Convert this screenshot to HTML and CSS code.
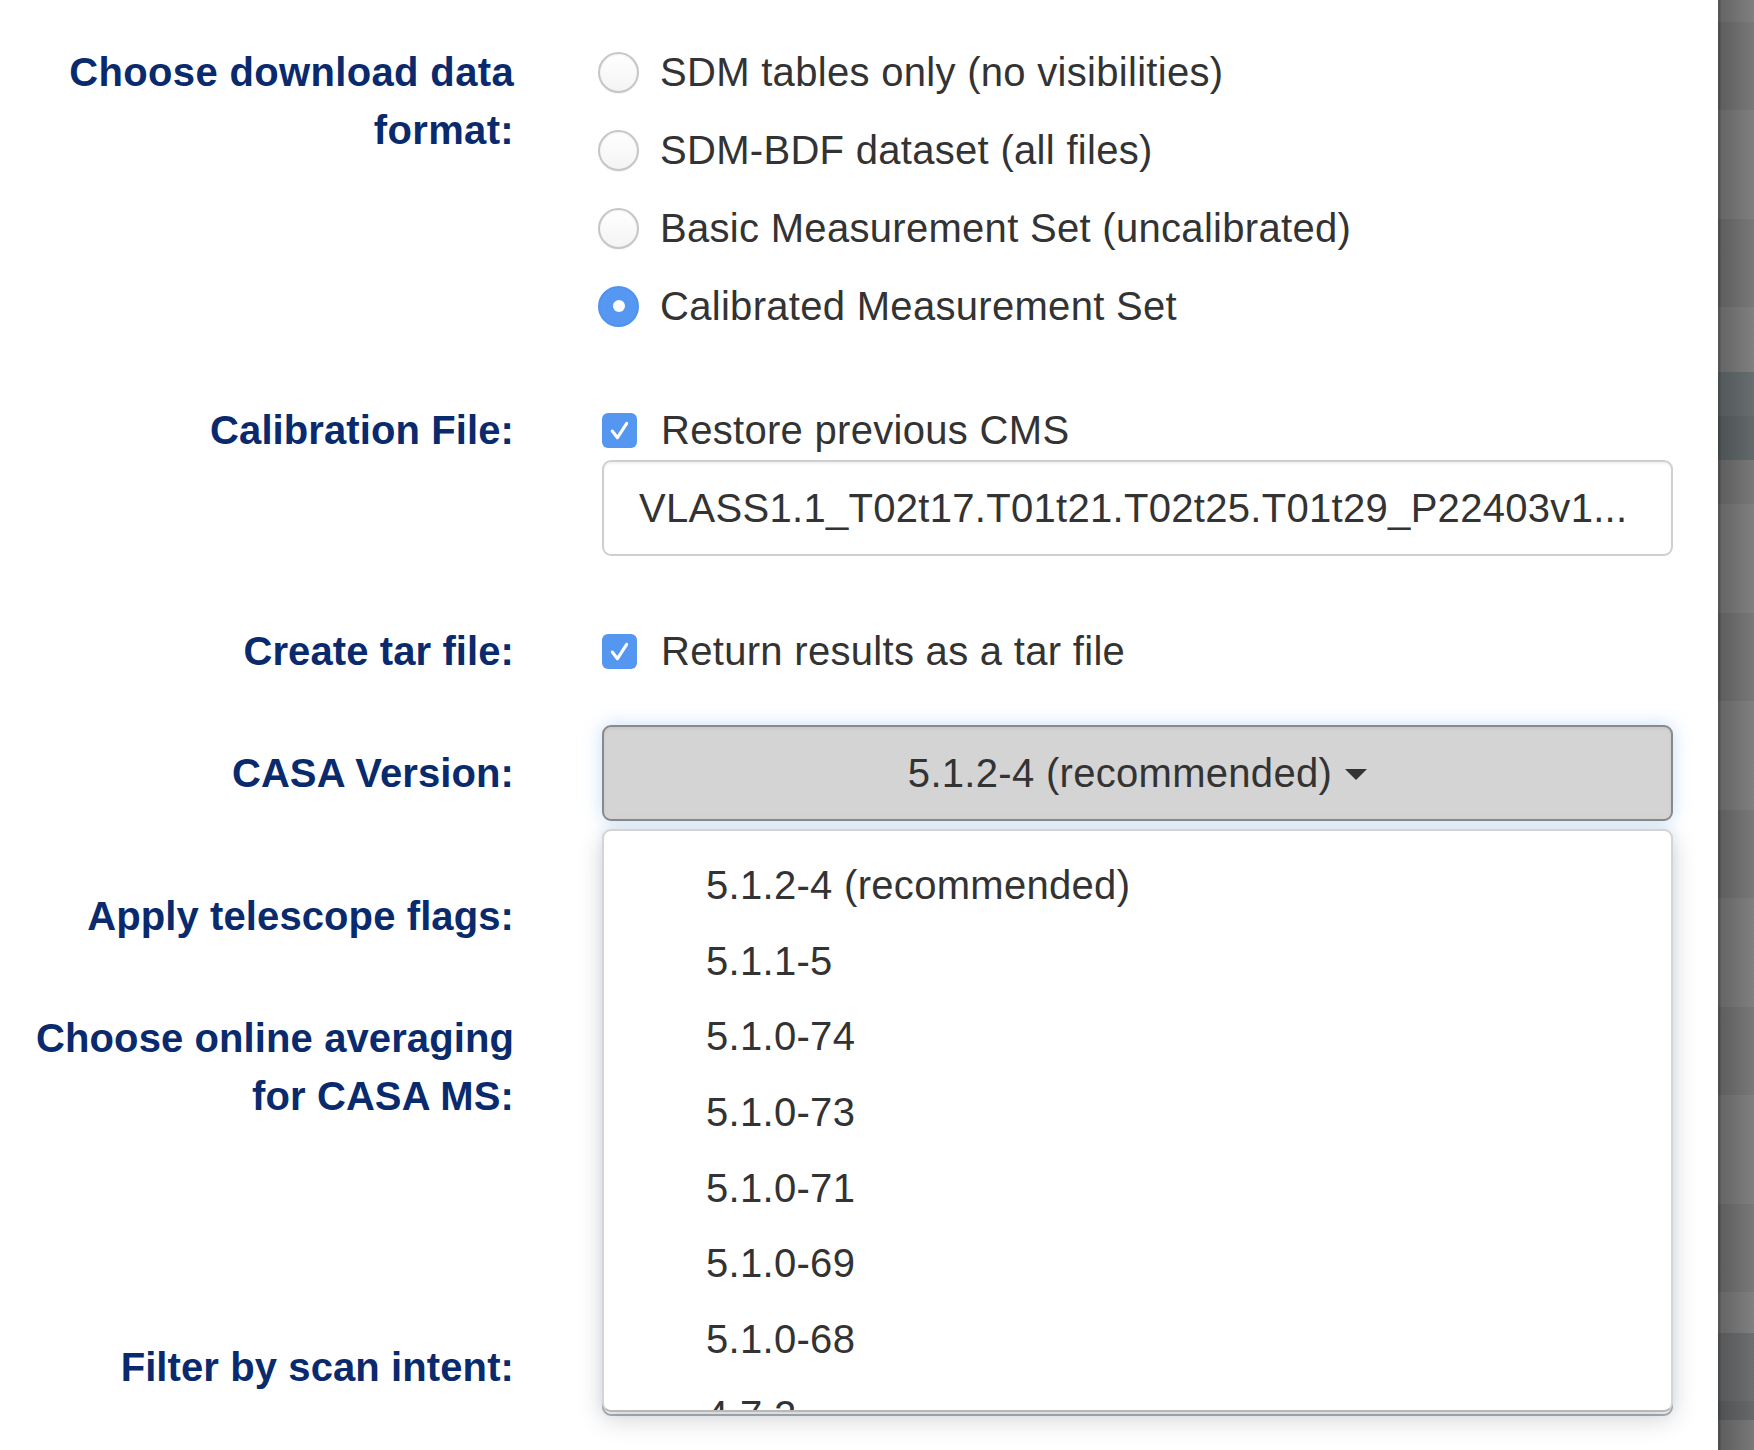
FILE: index.html
```html
<!DOCTYPE html>
<html lang="en">
<head>
<meta charset="utf-8">
<title>Download options</title>
<link rel="stylesheet" href="styles.css">
</head>
<body>
<div class="page">
  <main class="main">
    <form class="form">
      <div class="row row-format">
        <label class="lbl lbl-format">Choose download data<br>format:</label>
        <div class="ctl">
          <div class="opt"><span class="radio"></span><span>SDM tables only (no visibilities)</span></div>
          <div class="opt"><span class="radio"></span><span>SDM-BDF dataset (all files)</span></div>
          <div class="opt"><span class="radio"></span><span>Basic Measurement Set (uncalibrated)</span></div>
          <div class="opt"><span class="radio checked"></span><span>Calibrated Measurement Set</span></div>
        </div>
      </div>

      <div class="row row-cal">
        <label class="lbl lbl-line">Calibration File:</label>
        <div class="ctl">
          <div class="chk-line"><span class="checkbox"><svg viewBox="0 0 34 34" width="34" height="34"><polyline points="10,17.5 15,24 24,10" fill="none" stroke="#fff" stroke-width="3" stroke-linecap="round" stroke-linejoin="round"/></svg></span><span>Restore previous CMS</span></div>
          <div class="input">VLASS1.1_T02t17.T01t21.T02t25.T01t29_P22403v1...</div>
        </div>
      </div>

      <div class="row row-tar">
        <label class="lbl lbl-line">Create tar file:</label>
        <div class="ctl">
          <div class="chk-line"><span class="checkbox"><svg viewBox="0 0 34 34" width="34" height="34"><polyline points="10,17.5 15,24 24,10" fill="none" stroke="#fff" stroke-width="3" stroke-linecap="round" stroke-linejoin="round"/></svg></span><span>Return results as a tar file</span></div>
        </div>
      </div>

      <div class="row row-casa">
        <label class="lbl lbl-casa">CASA Version:</label>
        <div class="ctl dd">
          <div class="btn"><span>5.1.2-4 (recommended)</span><span class="caret"></span></div>
          <ul class="menu">
            <li>5.1.2-4 (recommended)</li>
            <li>5.1.1-5</li>
            <li>5.1.0-74</li>
            <li>5.1.0-73</li>
            <li>5.1.0-71</li>
            <li>5.1.0-69</li>
            <li>5.1.0-68</li>
            <li>4.7.2</li>
          </ul>
        </div>
      </div>

      <div class="row row-flags">
        <label class="lbl lbl-flags">Apply telescope flags:</label>
        <div class="ctl"><div class="under under-flags"></div></div>
      </div>

      <div class="row row-avg">
        <label class="lbl lbl-avg">Choose online averaging<br>for CASA MS:</label>
        <div class="ctl">
          <div class="under under-avg1"></div>
          <div class="under under-avg2"></div>
        </div>
      </div>

      <div class="row row-filter">
        <label class="lbl lbl-filter">Filter by scan intent:</label>
        <div class="ctl"><div class="under under-filter"></div></div>
      </div>
    </form>
  </main>
  <aside class="strip"></aside>
</div>
</body>
</html>
```

FILE: styles.css
```css
* { box-sizing: border-box; }
html, body {
  margin: 0;
  padding: 0;
  background: #fff;
  height: 1450px;
  overflow: hidden;
}
body {
  font-family: "Liberation Sans", Arial, Helvetica, sans-serif;
  color: #333;
  font-size: 40px;
  letter-spacing: 0.3px;
}
.page {
  display: flex;
  height: 1450px;
}
.main {
  width: 1718px;
  flex: none;
  background: #fff;
}
.strip {
  flex: 1;
  height: 1450px;
  background:
    linear-gradient(to bottom,
      transparent 0, transparent 372px,
      rgba(20, 45, 55, 0.22) 372px, rgba(20, 45, 55, 0.22) 460px,
      transparent 460px, transparent 1333px,
      rgba(20, 30, 35, 0.18) 1333px, rgba(20, 30, 35, 0.18) 1420px,
      transparent 1420px),
    repeating-linear-gradient(to bottom,
      rgba(255, 255, 255, 0.035) 0, rgba(255, 255, 255, 0.035) 22px,
      rgba(0, 0, 0, 0.02) 22px, rgba(0, 0, 0, 0.02) 110px,
      rgba(255, 255, 255, 0.035) 110px, rgba(255, 255, 255, 0.035) 197px),
    linear-gradient(to right, #4f4f4f 0, #4f4f4f 2px, #606060 3px, #6c6c6c 50%, #7b7b7b 100%);
}

.form {
  display: flex;
  flex-direction: column;
}
.row {
  display: grid;
  grid-template-columns: 514px 1071px;
  column-gap: 88px;
  align-items: start;
}
.lbl {
  display: block;
  text-align: right;
  font-weight: bold;
  color: #0a2a6e;
  line-height: 58px;
  white-space: nowrap;
  letter-spacing: 0.1px;
}
.lbl-format { letter-spacing: 0.35px; }
.ctl {
  position: relative;
}

/* Row 1: radios */
.row-format { margin-top: 33px; }
.lbl-format { padding-top: 10px; }
.opt {
  height: 78px;
  display: flex;
  align-items: center;
  gap: 21px;
  margin-left: -4px;
}
.radio {
  width: 41px;
  height: 41px;
  flex: none;
  border-radius: 50%;
  border: 2px solid #c6c6c6;
  background: linear-gradient(#ffffff, #f4f4f4);
  box-shadow: inset 0 1px 2px rgba(0, 0, 0, 0.06), 0 1px 1px rgba(0, 0, 0, 0.05);
  position: relative;
}
.radio.checked {
  border-color: #4f93ef;
  background: #5597f1;
  box-shadow: none;
}
.radio.checked::after {
  content: "";
  position: absolute;
  left: 50%;
  top: 50%;
  width: 12px;
  height: 12px;
  margin: -6px 0 0 -6px;
  border-radius: 50%;
  background: #fff;
}

/* Checkbox rows */
.chk-line {
  height: 58px;
  display: flex;
  align-items: center;
  gap: 24px;
}
.checkbox {
  width: 35px;
  height: 35px;
  flex: none;
  border-radius: 6px;
  background: #5597f0;
  display: block;
}
.checkbox svg { display: block; width: 35px; height: 35px; }

.row-cal { margin-top: 56px; }
.input {
  margin-top: 1px;
  height: 96px;
  border: 2px solid #cfcfcf;
  border-radius: 9px;
  box-shadow: inset 0 2px 2px rgba(0, 0, 0, 0.05);
  padding-left: 35px;
  display: flex;
  align-items: center;
  color: #333;
  white-space: nowrap;
  overflow: hidden;
}

.row-tar { margin-top: 66px; }

/* CASA version dropdown */
.row-casa {
  margin-top: 45px;
  position: relative;
  z-index: 5;
}
.lbl-casa { line-height: 96px; }
.btn {
  height: 96px;
  background: #d4d4d4;
  border: 2px solid #8a8a8a;
  border-radius: 9px;
  display: flex;
  align-items: center;
  justify-content: center;
  gap: 13px;
  color: #333;
  box-shadow: 0 0 18px rgba(90, 160, 240, 0.35), inset 0 2px 3px rgba(0, 0, 0, 0.06);
}
.caret {
  width: 0;
  height: 0;
  border-left: 11px solid transparent;
  border-right: 11px solid transparent;
  border-top: 11px solid #333;
  margin-top: 2px;
}
.menu {
  position: absolute;
  left: 0;
  right: 0;
  top: calc(100% + 8px);
  height: 583px;
  margin: 0;
  padding: 17px 0 0 0;
  list-style: none;
  background: #fff;
  border: 2px solid rgba(0, 0, 0, 0.17);
  border-bottom-color: rgba(0, 0, 0, 0.28);
  border-radius: 9px;
  box-shadow: 0 8px 26px rgba(0, 0, 0, 0.16), 0 0 12px rgba(90, 160, 240, 0.15);
  overflow: hidden;
}
.menu li {
  height: 75.7px;
  line-height: 75.7px;
  padding-left: 102px;
  color: #333;
  white-space: nowrap;
}

/* Rows hidden behind the dropdown */
.under {
  border: 2px solid #b4b4b4;
  border-radius: 9px;
  background: #fff;
}
.row-flags { margin-top: 63px; }
.lbl-flags { line-height: 64px; }
.under-flags { height: 64px; }

.row-avg { margin-top: 37px; }
.lbl-avg { padding-top: 24px; }
.under-avg1 { height: 105px; }
.under-avg2 { height: 106px; margin-top: 36px; }

.row-filter { margin-top: 80px; }
.lbl-filter { padding-top: 26px; }
.under-filter { height: 104px; }
```
